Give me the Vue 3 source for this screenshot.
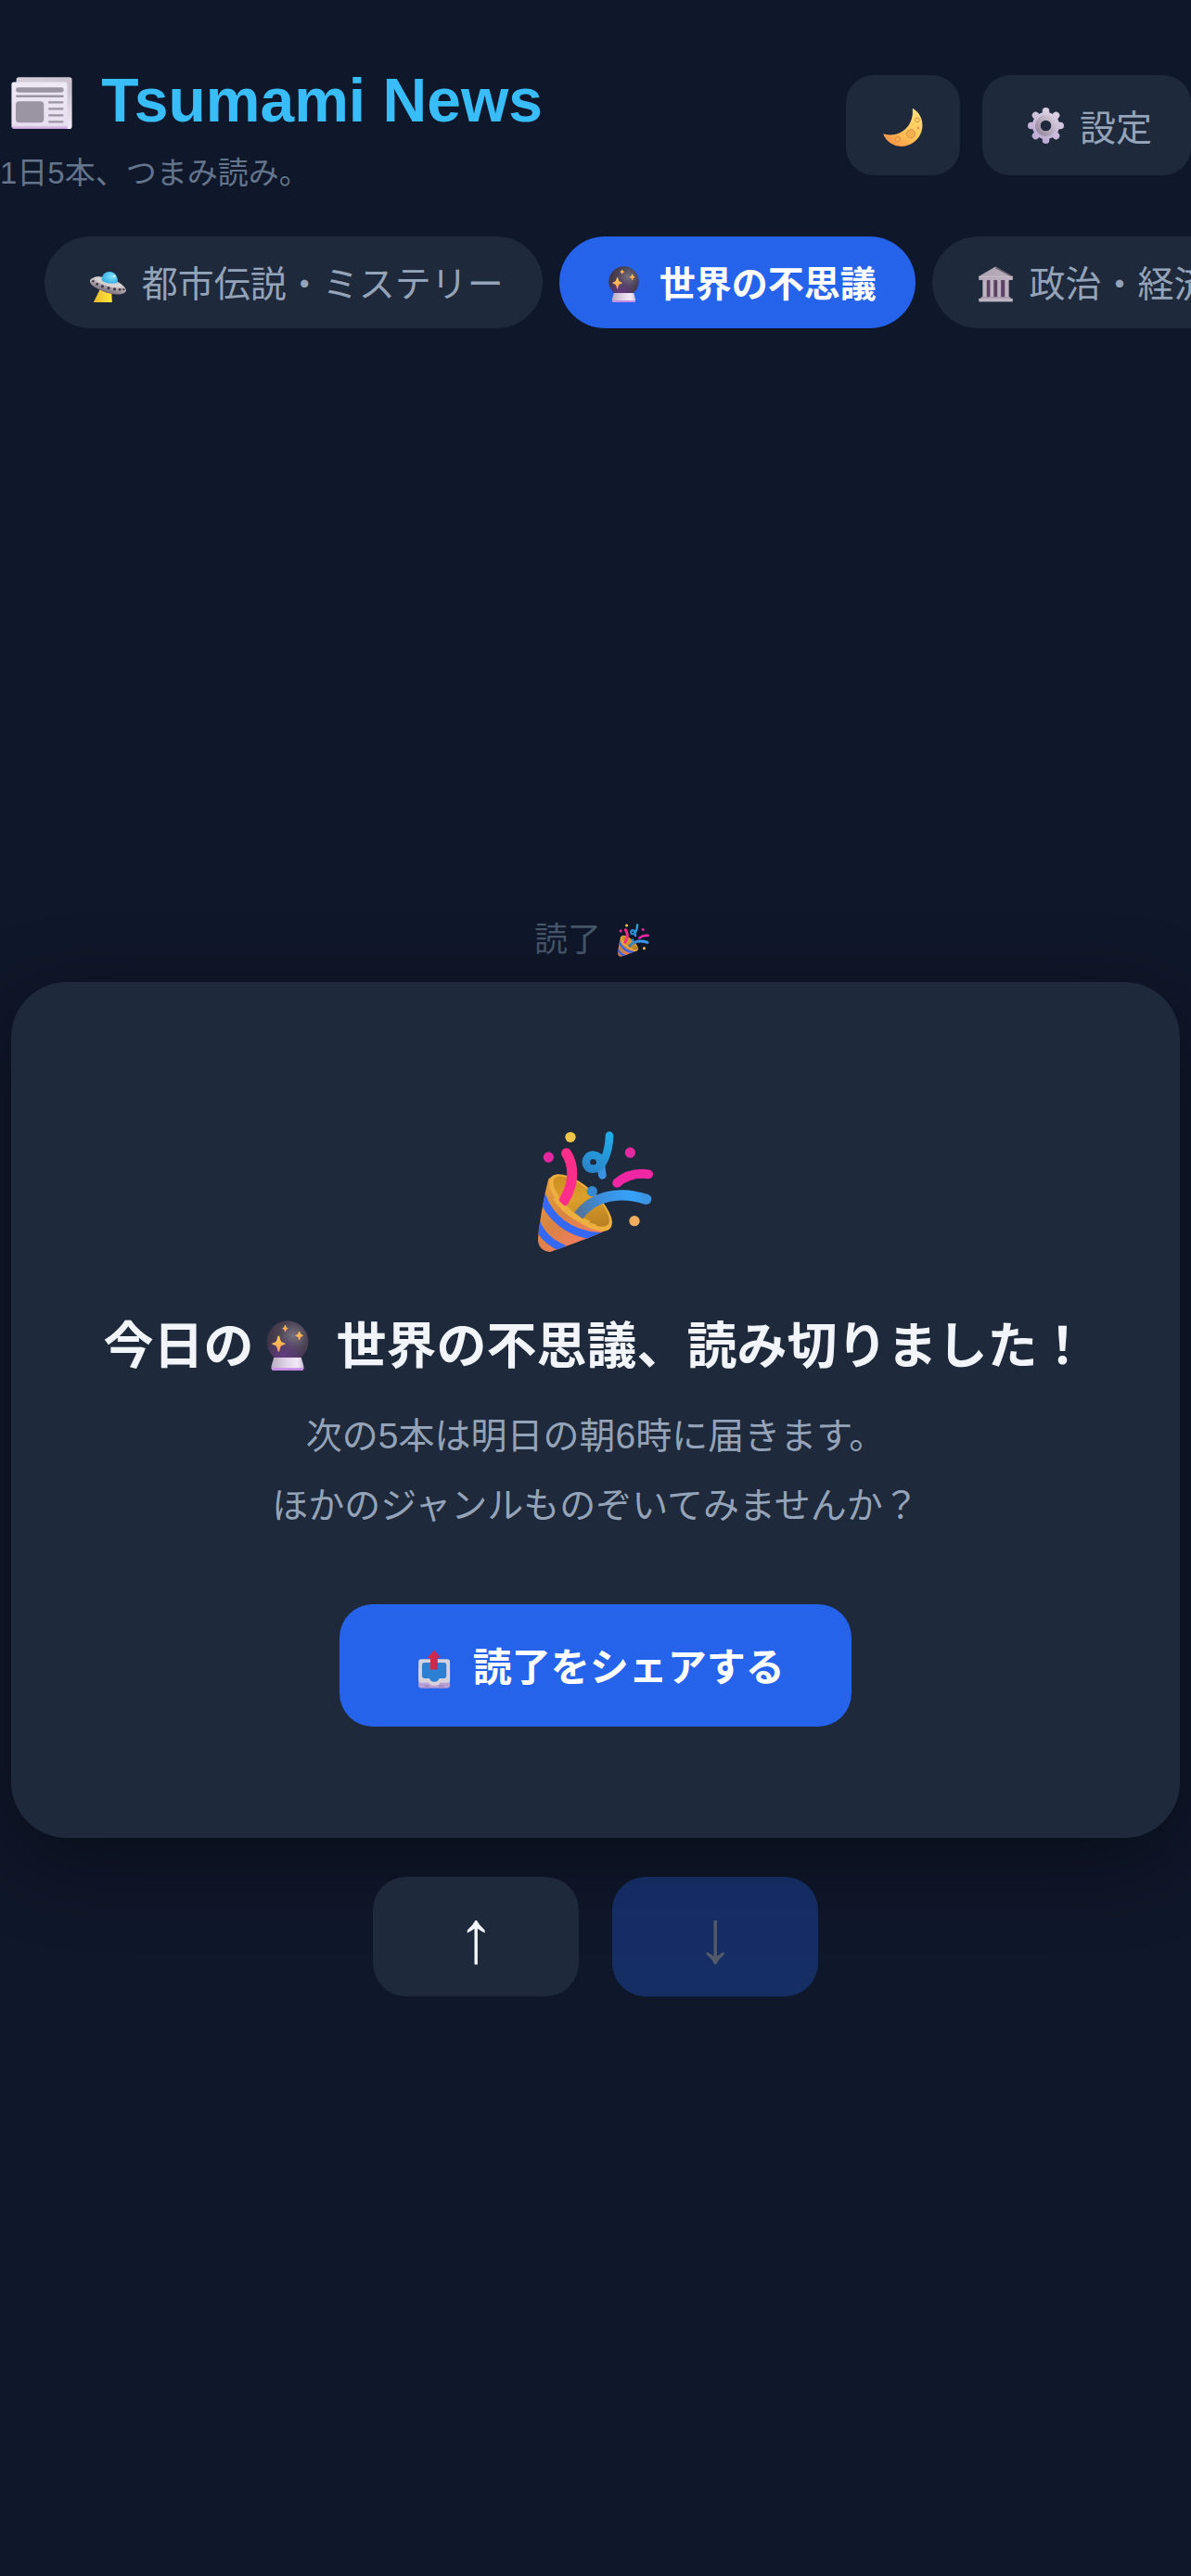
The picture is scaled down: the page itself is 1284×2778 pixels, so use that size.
<template>
  <div class="app">
    <!-- shared icon artwork -->
    <svg class="sprite" width="0" height="0" aria-hidden="true">
      <defs>
        <linearGradient id="paper" x1="0" y1="0" x2="0" y2="1">
          <stop offset="0" stop-color="#efe8f5" /><stop offset=".92" stop-color="#e8dff0" /><stop offset="1" stop-color="#c09ad8" />
        </linearGradient>
        <linearGradient id="paper-back" x1="0" y1="0" x2="1" y2="1">
          <stop offset="0" stop-color="#d6cfda" /><stop offset=".6" stop-color="#cbc2d0" /><stop offset="1" stop-color="#f5eefa" />
        </linearGradient>
        <linearGradient id="moon-fill" x1=".9" y1="0" x2=".1" y2="1">
          <stop offset="0" stop-color="#ffe27a" /><stop offset=".55" stop-color="#ffc356" /><stop offset="1" stop-color="#f98a45" />
        </linearGradient>
        <linearGradient id="gear-fill" gradientUnits="userSpaceOnUse" x1="24" y1="2" x2="8" y2="31">
          <stop offset="0" stop-color="#dcd3e3" /><stop offset="1" stop-color="#bba6d4" />
        </linearGradient>
        <linearGradient id="gear-ring" gradientUnits="userSpaceOnUse" x1="24" y1="8" x2="8" y2="22">
          <stop offset="0" stop-color="#d9cfe0" /><stop offset="1" stop-color="#97899f" />
        </linearGradient>
        <linearGradient id="saucer" x1="0" y1="0" x2="0" y2="1">
          <stop offset="0" stop-color="#d8d2d2" /><stop offset=".5" stop-color="#b5adb0" /><stop offset="1" stop-color="#736675" />
        </linearGradient>
        <radialGradient id="dome" cx=".65" cy=".4" r=".7">
          <stop offset="0" stop-color="#7fe2ff" /><stop offset="1" stop-color="#2ea9e0" />
        </radialGradient>
        <linearGradient id="beam" x1="0" y1="0" x2="1" y2="0">
          <stop offset="0" stop-color="#e9bb2b" /><stop offset="1" stop-color="#ffe63d" />
        </linearGradient>
        <radialGradient id="ball" cx=".64" cy=".36" r=".7">
          <stop offset="0" stop-color="#77727f" /><stop offset=".5" stop-color="#4b4253" /><stop offset="1" stop-color="#3d3040" />
        </radialGradient>
        <radialGradient id="ball-glow" cx=".4" cy=".9" r=".55">
          <stop offset="0" stop-color="#643c86" /><stop offset="1" stop-color="#643c86" stop-opacity="0" />
        </radialGradient>
        <linearGradient id="ball-base" x1="0" y1="0" x2="1" y2="0">
          <stop offset="0" stop-color="#b9abc2" /><stop offset=".5" stop-color="#e3d8ea" /><stop offset=".8" stop-color="#f1e9f6" /><stop offset="1" stop-color="#cdbdd8" />
        </linearGradient>
        <linearGradient id="star" x1="0" y1="0" x2="0" y2="1">
          <stop offset="0" stop-color="#ffd04f" /><stop offset="1" stop-color="#ff9a62" />
        </linearGradient>
        <linearGradient id="stone" x1="0" y1="0" x2="1" y2="1">
          <stop offset="0" stop-color="#aaa0ab" /><stop offset="1" stop-color="#bfb2c3" />
        </linearGradient>
        <linearGradient id="arrow-red" x1="0" y1="0" x2="1" y2="0">
          <stop offset="0" stop-color="#e6262e" /><stop offset="1" stop-color="#b82a6c" />
        </linearGradient>
        <linearGradient id="cone" gradientUnits="userSpaceOnUse" x1="40" y1="200" x2="190" y2="400">
          <stop offset="0" stop-color="#e5a036" /><stop offset=".5" stop-color="#d88443" /><stop offset="1" stop-color="#f47c66" />
        </linearGradient>
        <linearGradient id="cone-inside" gradientUnits="userSpaceOnUse" x1="80" y1="190" x2="250" y2="330">
          <stop offset="0" stop-color="#c98a1f" /><stop offset=".45" stop-color="#dc9f2b" /><stop offset="1" stop-color="#b17a20" />
        </linearGradient>
        <linearGradient id="stream-blue" gradientUnits="userSpaceOnUse" x1="165" y1="310" x2="390" y2="240">
          <stop offset="0" stop-color="#52749c" /><stop offset=".35" stop-color="#3c8ede" /><stop offset=".75" stop-color="#36a3fa" /><stop offset="1" stop-color="#3d92dd" />
        </linearGradient>
        <linearGradient id="curl" gradientUnits="userSpaceOnUse" x1="255" y1="35" x2="190" y2="165">
          <stop offset="0" stop-color="#20aee8" /><stop offset="1" stop-color="#2b82ca" />
        </linearGradient>
        <clipPath id="cone-clip">
          <path d="M62 184C52 215 32 320 27 380C25 405 46 426 70 421C120 403 210 372 250 350C270 338 258 320 240 300L95 178Z" />
        </clipPath>
      </defs>

      <symbol id="icon-news" viewBox="0 0 32 32">
        <rect x="2.7" y="2.5" width="29.1" height="27.1" rx="1.4" fill="url(#paper-back)" />
        <path d="M1.4 5.1H28.2Q29.4 5.1 29.4 6.6V29.6H1.4Q.2 29.6 .2 28.4V6.4Q.2 5.1 1.4 5.1Z" fill="url(#paper)" />
        <g fill="#9b94a2">
          <rect x="2.5" y="7.9" width="25" height="2.6" rx="1.2" />
          <rect x="2.5" y="11.9" width="25" height="1.2" rx=".6" />
          <rect x="2.4" y="15.1" width="14.7" height="11.2" rx="1.8" />
          <rect x="19.4" y="15.1" width="8" height="1.1" rx=".5" />
          <rect x="19.4" y="18.5" width="8" height="1.1" rx=".5" />
          <rect x="19.4" y="21.9" width="8" height="1.1" rx=".5" />
          <rect x="19.4" y="25.3" width="8" height="1.1" rx=".5" />
        </g>
      </symbol>

      <symbol id="icon-moon" viewBox="0 0 32 32">
        <path d="M24 1.6C28.5 4.5 31 9.3 30.9 14.6C30.7 23.4 23.5 30.5 14.7 30.5C8.6 30.5 3.2 27 1 21.4Q.9 20.8 1.6 20.9C12.5 24.3 24.5 16 23.3 2Q23.4 1.3 24 1.6Z" fill="url(#moon-fill)" />
        <g fill="#f6b04d" stroke="#dd8a45" stroke-width=".7">
          <circle cx="22" cy="20.8" r="3.2" />
          <circle cx="12" cy="25" r="1.9" />
          <circle cx="27" cy="10.2" r="1.7" fill="#ffd96b" />
          <circle cx="27.6" cy="16.4" r=".7" />
        </g>
      </symbol>

      <symbol id="icon-gear" viewBox="0 0 32 32">
        <g stroke="url(#gear-fill)" stroke-width="6.2" stroke-linecap="round">
          <path d="M16 8V3.1M16 24V28.9M8 16H3.1M24 16H28.9M10.4 10.4L7 7M21.6 21.6L25 25M21.6 10.4L25 7M10.4 21.6L7 25" />
        </g>
        <circle cx="16" cy="16" r="9" fill="none" stroke="url(#gear-fill)" stroke-width="6" />
        <circle cx="16" cy="16" r="7.1" fill="none" stroke="url(#gear-ring)" stroke-width="4.6" />
      </symbol>

      <symbol id="icon-ufo" viewBox="0 0 32 32">
        <path d="M9 20L3.2 32H19.6L19 22Z" fill="url(#beam)" />
        <g transform="rotate(17 16 17)">
          <ellipse cx="16" cy="17.4" rx="16.6" ry="6.2" fill="url(#saucer)" />
          <ellipse cx="15.4" cy="14.2" rx="13" ry="3.4" fill="#d8d3d3" />
        </g>
        <path d="M10.2 12.5C10.6 7.5 13.4 4.9 17.4 4.9C22 4.9 25 9 24.4 14.8C20 16.2 13 15.2 10.2 12.5Z" fill="url(#dome)" />
        <g fill="#41364a">
          <circle cx="2.8" cy="13.4" r="1" /><circle cx="6.3" cy="15.9" r="1.2" /><circle cx="11" cy="17.9" r="1.3" />
          <circle cx="16.4" cy="19.4" r="1.3" /><circle cx="21.8" cy="20.4" r="1.3" /><circle cx="26.4" cy="20.8" r="1.2" /><circle cx="29.8" cy="20.6" r="1" />
        </g>
        <circle cx="21.5" cy="9" r="1" fill="#d8f7ff" />
      </symbol>

      <symbol id="icon-crystal" viewBox="0 0 32 32">
        <circle cx="16" cy="13.5" r="13.3" fill="url(#ball)" />
        <circle cx="16" cy="13.5" r="13.3" fill="url(#ball-glow)" />
        <path d="M7.2 23.7H24.8C25.2 26 26.4 28.4 26.4 30.2Q26.4 32 24.6 32H7.4Q5.6 32 5.6 30.2C5.6 28.4 6.8 26 7.2 23.7Z" fill="url(#ball-base)" />
        <path d="M5.7 30.4H26.3Q26.2 32 24.6 32H7.4Q5.8 32 5.7 30.4Z" fill="#c58ae6" />
        <g fill="url(#star)">
          <path d="M10.3 9.8Q10.9 9.8 11.3 12.2Q11.6 13.7 13 14Q14.6 14.3 14.6 14.9Q14.6 15.4 13 15.7Q11.6 16 11.3 17.5Q10.9 20 10.3 20Q9.7 20 9.3 17.5Q9 16 7.6 15.7Q6 15.4 6 14.9Q6 14.3 7.6 14Q9 13.7 9.3 12.2Q9.7 9.8 10.3 9.8Z" />
          <path d="M23.5 6.9Q24 6.9 24.3 8.8Q26 9.3 26 9.7Q26 10.1 24.3 10.6Q24 12.6 23.5 12.6Q23 12.6 22.7 10.6Q21 10.1 21 9.7Q21 9.3 22.7 8.8Q23 6.9 23.5 6.9Z" />
          <path d="M14.5 3Q14.9 3 15.2 4.4Q16.4 4.8 16.4 5.1Q16.4 5.4 15.2 5.8Q14.9 7.3 14.5 7.3Q14.1 7.3 13.8 5.8Q12.6 5.4 12.6 5.1Q12.6 4.8 13.8 4.4Q14.1 3 14.5 3Z" />
        </g>
      </symbol>

      <symbol id="icon-hall" viewBox="0 0 32 32">
        <rect x="5" y="11" width="22" height="18" fill="#5d4265" />
        <path d="M15.8 .5L31 9V12.3H1V9Z" fill="url(#stone)" />
        <path d="M16 .5L31 9H29L16 2Z" fill="#665a68" />
        <path d="M1 9.4H31" stroke="#c9bdcb" stroke-width=".8" />
        <g fill="#beb3c1">
          <rect x="4.4" y="12.3" width="3.6" height="16" /><rect x="11" y="12.3" width="3.2" height="16" />
          <rect x="17.4" y="12.3" width="3.2" height="16" /><rect x="24" y="12.3" width="3.6" height="16" />
        </g>
        <rect x="3" y="27.2" width="26" height="2" fill="#a99dad" />
        <rect x="1" y="28.6" width="30" height="2.9" fill="#bfb4c3" />
      </symbol>

      <symbol id="icon-outbox" viewBox="0 0 32 32">
        <rect x="3.2" y="14" width="25.8" height="17.6" rx="2.2" fill="#b79fd4" />
        <path d="M8 29H12V31.6H8ZM20 29H24V31.6H20Z" fill="#a98fc8" />
        <path d="M5.4 7.8H26.8Q29 7.8 29 10V25Q29 27.2 26.8 27.2H21Q19.6 29.6 16.2 29.6Q12.8 29.6 11.4 27.2H5.4Q3.2 27.2 3.2 25V10Q3.2 7.8 5.4 7.8Z" fill="#d7d1de" />
        <path d="M8 10.6H24.2Q26.1 10.6 26.1 12.4V21.8Q26.1 23.6 24.2 23.6H20.2Q19.4 26.4 16.2 26.4Q13 26.4 12.2 23.6H8Q6.1 23.6 6.1 21.8V12.4Q6.1 10.6 8 10.6Z" fill="#2c80d3" />
        <path d="M16.1 .4L21.2 6.2Q21.3 6.8 20.6 6.8H18.9V16.4H12.9V6.8H11.4Q10.7 6.8 10.9 6.2Z" fill="url(#arrow-red)" />
      </symbol>

      <symbol id="icon-party" viewBox="15 29 396 396">
        <g clip-path="url(#cone-clip)">
          <rect x="15" y="160" width="270" height="270" fill="url(#cone)" />
          <g fill="none" stroke="#3568f4" stroke-width="25">
            <path d="M40 240C60 305 125 368 230 372" />
            <path d="M22 328C38 366 68 396 112 412" />
          </g>
        </g>
        <ellipse cx="165" cy="263" rx="127" ry="53" transform="rotate(41 165 263)" fill="#edb03f" />
        <ellipse cx="167" cy="259" rx="114" ry="43" transform="rotate(41 167 259)" fill="url(#cone-inside)" />
        <path d="M119 103C146 145 143 205 110 258" fill="none" stroke="#ff2e8b" stroke-width="33" stroke-linecap="round" />
        <path d="M84 244Q126 295 196 322L180 336Q110 306 76 252Z" fill="#edb03f" />
        <path d="M158 305C208 240 290 224 377 252" fill="none" stroke="url(#stream-blue)" stroke-width="34" />
        <circle cx="377" cy="252" r="17" fill="#3d94e2" />
        <path d="M140 298Q175 324 218 334L206 342Q162 330 132 304Z" fill="#edb03f" />
        <path d="M283 199Q325 163 384 171" fill="none" stroke="#f027a4" stroke-width="30" stroke-linecap="round" />
        <path d="M228 125L235 174" fill="none" stroke="#3c91e2" stroke-width="26" stroke-linecap="round" />
        <path d="M258 46C257 92 240 154 204 154C174 154 176 108 206 109C222 110 230 122 235 136" fill="none" stroke="url(#curl)" stroke-width="26" stroke-linecap="round" />
        <circle cx="132" cy="51" r="17" fill="#efc448" />
        <circle cx="61" cy="116" r="17" fill="#e227a0" />
        <circle cx="325" cy="101" r="17" fill="#e02a9f" />
        <circle cx="339" cy="322" r="17" fill="#f1ad5c" />
        <circle cx="202" cy="226" r="17" fill="#3489d1" />
      </symbol>
    </svg>

    <header class="header">
      <div class="brand">
        <h1><svg class="icon icon-title"><use href="#icon-news" /></svg> Tsumami News</h1>
        <p class="tagline">1日5本、つまみ読み。</p>
      </div>
      <div class="actions">
        <button type="button" class="action" aria-label="テーマ"><svg class="icon-moon"><use href="#icon-moon" /></svg></button>
        <button type="button" class="action"><svg class="icon icon-text"><use href="#icon-gear" /></svg> 設定</button>
      </div>
    </header>

    <nav class="tabs">
      <button
        v-for="genre in genres"
        :key="genre.name"
        type="button"
        class="tab"
        :class="{ active: genre.name === current }"
        @click="current = genre.name"
      ><svg class="icon icon-text"><use :href="genre.icon" /></svg> {{ genre.name }}</button>
    </nav>

    <main class="main">
      <p class="progress">読了 <svg class="icon icon-small"><use href="#icon-party" /></svg></p>
      <section class="card">
        <svg class="party"><use href="#icon-party" /></svg>
        <h2>今日の<svg class="icon icon-heading"><use href="#icon-crystal" /></svg> 世界の不思議、読み切りました！</h2>
        <p class="message">次の5本は明日の朝6時に届きます。<br>ほかのジャンルものぞいてみませんか？</p>
        <button type="button" class="share"><svg class="icon icon-share"><use href="#icon-outbox" /></svg> 読了をシェアする</button>
      </section>
      <div class="pager">
        <button type="button" class="page-button">↑</button>
        <button type="button" class="page-button next" disabled>↓</button>
      </div>
    </main>
  </div>
</template>

<script setup>
import { ref } from 'vue';

const genres = [
  { name: '都市伝説・ミステリー', icon: '#icon-ufo' },
  { name: '世界の不思議', icon: '#icon-crystal' },
  { name: '政治・経済', icon: '#icon-hall' },
];

const current = ref('世界の不思議');
</script>

<style>
body {
  margin: 0;
  background-color: #0f172a;
}
</style>

<style scoped>
.app {
  display: flex;
  flex-direction: column;
  min-height: 100vh;
  overflow: hidden;
  color: #f1f5f9;
  font-family: "Liberation Sans", "Noto Sans CJK JP", sans-serif;
}

.sprite {
  position: absolute;
}

h1, h2, p {
  margin: 0;
}

button {
  border: none;
  font-family: inherit;
  cursor: pointer;
}

.header {
  display: flex;
  align-items: center;
  justify-content: space-between;
  padding-top: 52px;
}

.brand {
  padding-bottom: 8px;
}

h1 {
  font-size: 66px;
  line-height: 112px;
  color: #38bdf8;
}

.tagline {
  font-size: 33px;
  line-height: 46px;
  color: #64748b;
}

.actions {
  display: flex;
  gap: 24px;
}

.action {
  display: flex;
  align-items: center;
  justify-content: center;
  height: 108px;
  padding: 0 42px;
  border-radius: 30px;
  background-color: #1e293b;
  color: #94a3b8;
  font-size: 39px;
  white-space: pre;
}

.action:first-child {
  padding: 4px 39px 0;
}

.icon {
  vertical-align: -8px;
}

.icon-title {
  width: 66px;
  height: 66px;
  margin: 0 13px 0 12px;
  vertical-align: -13px;
}

.icon-heading {
  width: 54px;
  height: 54px;
  margin: 0 10px;
  vertical-align: -7px;
}

.icon-text {
  width: 39px;
  height: 39px;
  margin: 0 6px 0 7px;
  vertical-align: -6px;
}

.icon-moon {
  width: 45px;
  height: 45px;
}

.icon-share {
  width: 42px;
  height: 42px;
  margin: 0 9px;
}

.icon-small {
  width: 36px;
  height: 36px;
  margin: 0 7px;
  vertical-align: -6px;
}

.tabs {
  display: flex;
  gap: 18px;
  padding: 37px 48px 8px;
}

.tab {
  flex: none;
  height: 99px;
  padding: 0 42px 3px;
  border-radius: 50px;
  background-color: #1e293b;
  color: #94a3b8;
  font-size: 39px;
  white-space: nowrap;
}

.tab.active {
  background-color: #2563eb;
  color: #fff;
  font-weight: bold;
}

.tab.active .icon {
  margin: 0 8px;
}

.main {
  flex: 1;
  display: flex;
  flex-direction: column;
  justify-content: center;
  padding: 0 12px;
}

.progress {
  margin-bottom: 18px;
  font-size: 36px;
  line-height: 54px;
  text-align: center;
  color: #475569;
}

.card {
  display: flex;
  flex-direction: column;
  align-items: center;
  padding: 160px 60px 120px;
  border-radius: 60px;
  background-color: #1e293b;
  box-shadow: 0 24px 90px rgba(0, 0, 0, 0.4);
  text-align: center;
}

.party {
  width: 132px;
  height: 132px;
  margin-bottom: 62px;
}

h2 {
  font-size: 54px;
  line-height: 78px;
}

.message {
  margin: 20px 0 69px;
  font-size: 39px;
  line-height: 75px;
  color: #94a3b8;
}

.share {
  height: 132px;
  padding: 0 72px 3px;
  border-radius: 36px;
  background-color: #2563eb;
  color: #fff;
  font-size: 42px;
  font-weight: bold;
}

.pager {
  display: flex;
  justify-content: center;
  gap: 36px;
  margin-top: 42px;
}

.page-button {
  width: 222px;
  height: 129px;
  border-radius: 36px;
  background-color: #1e293b;
  color: #f1f5f9;
  font-size: 80px;
  line-height: 100px;
}

.page-button.next {
  background-color: #2563eb;
}

.page-button:disabled {
  opacity: 0.3;
  cursor: default;
}
</style>
